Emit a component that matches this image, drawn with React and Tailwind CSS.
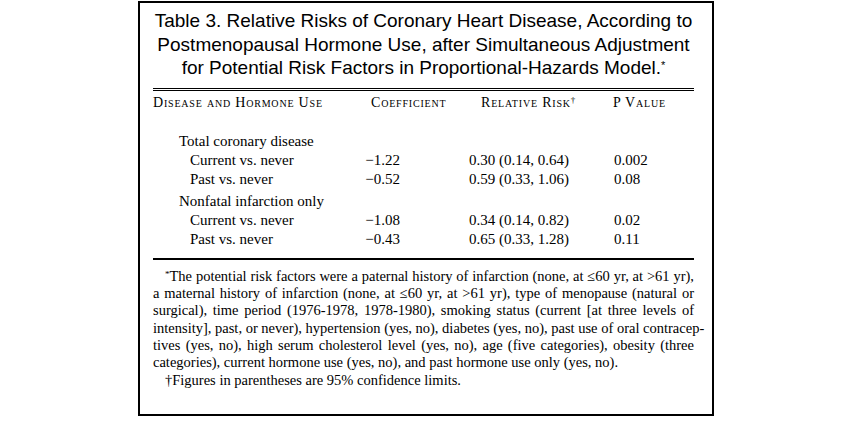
import React from 'react';

const rows = [
    { group: 'Total coronary disease' },
    { label: 'Current vs. never', coef: '\u22121.22', rr: '0.30 (0.14, 0.64)', p: '0.002' },
    { label: 'Past vs. never', coef: '\u22120.52', rr: '0.59 (0.33, 1.06)', p: '0.08' },
    { group: 'Nonfatal infarction only', gap: true },
    { label: 'Current vs. never', coef: '\u22121.08', rr: '0.34 (0.14, 0.82)', p: '0.02' },
    { label: 'Past vs. never', coef: '\u22120.43', rr: '0.65 (0.33, 1.28)', p: '0.11' },
];

const notes = [
    'a maternal history of infarction (none, at \u226460 yr, at >61 yr), type of menopause (natural or',
    'surgical), time period (1976-1978, 1978-1980), smoking status (current [at three levels of',
    'intensity], past, or never), hypertension (yes, no), diabetes (yes, no), past use of oral contracep-',
    'tives (yes, no), high serum cholesterol level (yes, no), age (five categories), obesity (three',
];

export default function App() {
    return (
        <div className="bg-white w-[850px] h-[445px] pt-[1px]">
            <div className="ml-[138px] w-[576px] h-[415px] border-2 border-black pl-[13px] pr-[18px] pt-[6px] text-black">
                <h1 className="text-center text-[19px] leading-[23.5px] font-['Liberation_Sans',Arial,sans-serif]">
                    Table 3. Relative Risks of Coronary Heart Disease, According to<br />
                    Postmenopausal Hormone Use, after Simultaneous Adjustment<br />
                    for Potential Risk Factors in Proportional-Hazards Model.<sup className="text-[11px]">*</sup>
                </h1>

                <div className="mt-[8px] border-t-[1.5px] border-black" />
                <div className="mt-[1.5px] border-t-[1.5px] border-black" />

                <div className="font-['Liberation_Serif','Times_New_Roman',serif]">
                    <div className="flex mt-[4px] text-[14px] leading-[16px] [font-variant:small-caps] tracking-[0.8px]">
                        <div className="w-[218px]">Disease and Hormone Use</div>
                        <div className="w-[110px]">Coefficient</div>
                        <div className="w-[132px]">Relative Risk<sup className="text-[9px]">†</sup></div>
                        <div>P Value</div>
                    </div>

                    <div className="mt-[21px] text-[15px] leading-[19px]">
                        {rows.map((r, i) =>
                            r.group ? (
                                <div key={i} className={`pl-[26px] ${r.gap ? 'mt-[3px]' : ''}`}>{r.group}</div>
                            ) : (
                                <div key={i} className="flex">
                                    <div className="w-[207px] pl-[37px]">{r.label}</div>
                                    <div className="w-[40px] text-right">{r.coef}</div>
                                    <div className="w-[69px]" />
                                    <div className="w-[145px]">{r.rr}</div>
                                    <div>{r.p}</div>
                                </div>
                            )
                        )}
                    </div>

                    <div className="mt-[9px] border-t-2 border-black" />

                    <div className="mt-[8px] text-[14.5px] leading-[17.2px]">
                        <div className="pl-[12px] text-justify [text-align-last:justify] whitespace-nowrap">
                            <sup className="text-[9px]">*</sup>The potential risk factors were a paternal history of infarction (none, at {'\u2264'}60 yr, at &gt;61 yr),
                        </div>
                        {notes.map((n, i) => (
                            <div key={i} className="text-justify [text-align-last:justify] whitespace-nowrap">{n}</div>
                        ))}
                        <div>categories), current hormone use (yes, no), and past hormone use only (yes, no).</div>
                        <div className="mt-[1px] pl-[12px]">†Figures in parentheses are 95% confidence limits.</div>
                    </div>
                </div>
            </div>
        </div>
    );
}
